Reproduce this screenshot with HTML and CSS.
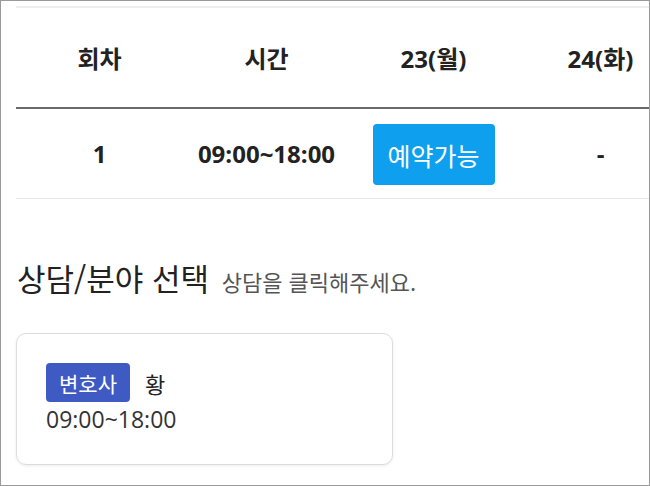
FILE: index.html
```html
<!DOCTYPE html>
<html lang="ko">
<head>
<meta charset="utf-8">
<link rel="stylesheet" href="styles.css">
</head>
<body>
<div class="frame">
  <table class="schedule">
    <thead>
      <tr>
        <th>회차</th>
        <th>시간</th>
        <th>23(월)</th>
        <th>24(화)</th>
      </tr>
    </thead>
    <tbody>
      <tr>
        <td>1</td>
        <td>09:00~18:00</td>
        <td><button class="reserve">예약가능</button></td>
        <td>-</td>
      </tr>
    </tbody>
  </table>

  <h2 class="section-title">상담/분야 선택 <small class="hint">상담을 클릭해주세요.</small></h2>

  <div class="card">
    <div class="card-top">
      <span class="badge">변호사</span>
      <span class="name">황</span>
    </div>
    <div class="time">09:00~18:00</div>
  </div>
</div>
</body>
</html>
```

FILE: styles.css
```css
html, body {
  margin: 0;
  padding: 0;
  background: #fff;
}
.frame {
  box-sizing: border-box;
  width: 650px;
  height: 486px;
  border: 1px solid #9a9a9a;
  overflow: hidden;
  padding: 5px 0 0 15px;
  font-family: "Open Sans", "Noto Sans CJK KR", sans-serif;
  color: #222;
}
.schedule {
  border-collapse: collapse;
  width: 668px;
  table-layout: fixed;
  border-top: 2px solid #eeeeee;
}
.schedule th {
  height: 99px;
  font-size: 24px;
  font-weight: 700;
  text-align: center;
  vertical-align: middle;
  border-bottom: 2px solid #6a6a6a;
  padding: 0;
  color: #222;
}
.schedule td {
  height: 89px;
  font-size: 24px;
  font-weight: 700;
  text-align: center;
  vertical-align: middle;
  border-bottom: 1px solid #e8e8e8;
  padding: 0;
  color: #222;
}
.reserve {
  font-family: "Noto Sans CJK KR", sans-serif;
  font-size: 25px;
  font-weight: 400;
  color: #fff;
  background: #0ea0ee;
  border: none;
  border-radius: 4px;
  width: 122px;
  height: 61px;
  padding: 0;
  margin-top: 2px;
}
.section-title {
  margin: 59px 0 0 1px;
  font-family: "Noto Sans CJK KR", sans-serif;
  font-size: 31px;
  font-weight: 400;
  color: #222;
  line-height: 40px;
}
.hint {
  font-size: 22px;
  color: #555;
  margin-left: 4px;
}
.card {
  box-sizing: border-box;
  width: 377px;
  height: 132px;
  margin-top: 32px;
  border: 1px solid #dcdcdc;
  border-radius: 10px;
  box-shadow: 0 1px 3px rgba(0,0,0,0.08);
  padding: 29px 0 0 29px;
}
.card-top {
  display: flex;
  align-items: center;
  gap: 15px;
}
.badge {
  display: inline-flex;
  align-items: center;
  justify-content: center;
  width: 84px;
  height: 39px;
  background: #3f5bc3;
  color: #fff;
  border-radius: 4px;
  font-family: "Noto Sans CJK KR", sans-serif;
  font-size: 21px;
}
.name {
  font-family: "Noto Sans CJK KR", sans-serif;
  font-size: 22px;
  color: #222;
}
.time {
  font-size: 23px;
  color: #333;
  margin-top: 3px;
  line-height: 28px;
}
```
